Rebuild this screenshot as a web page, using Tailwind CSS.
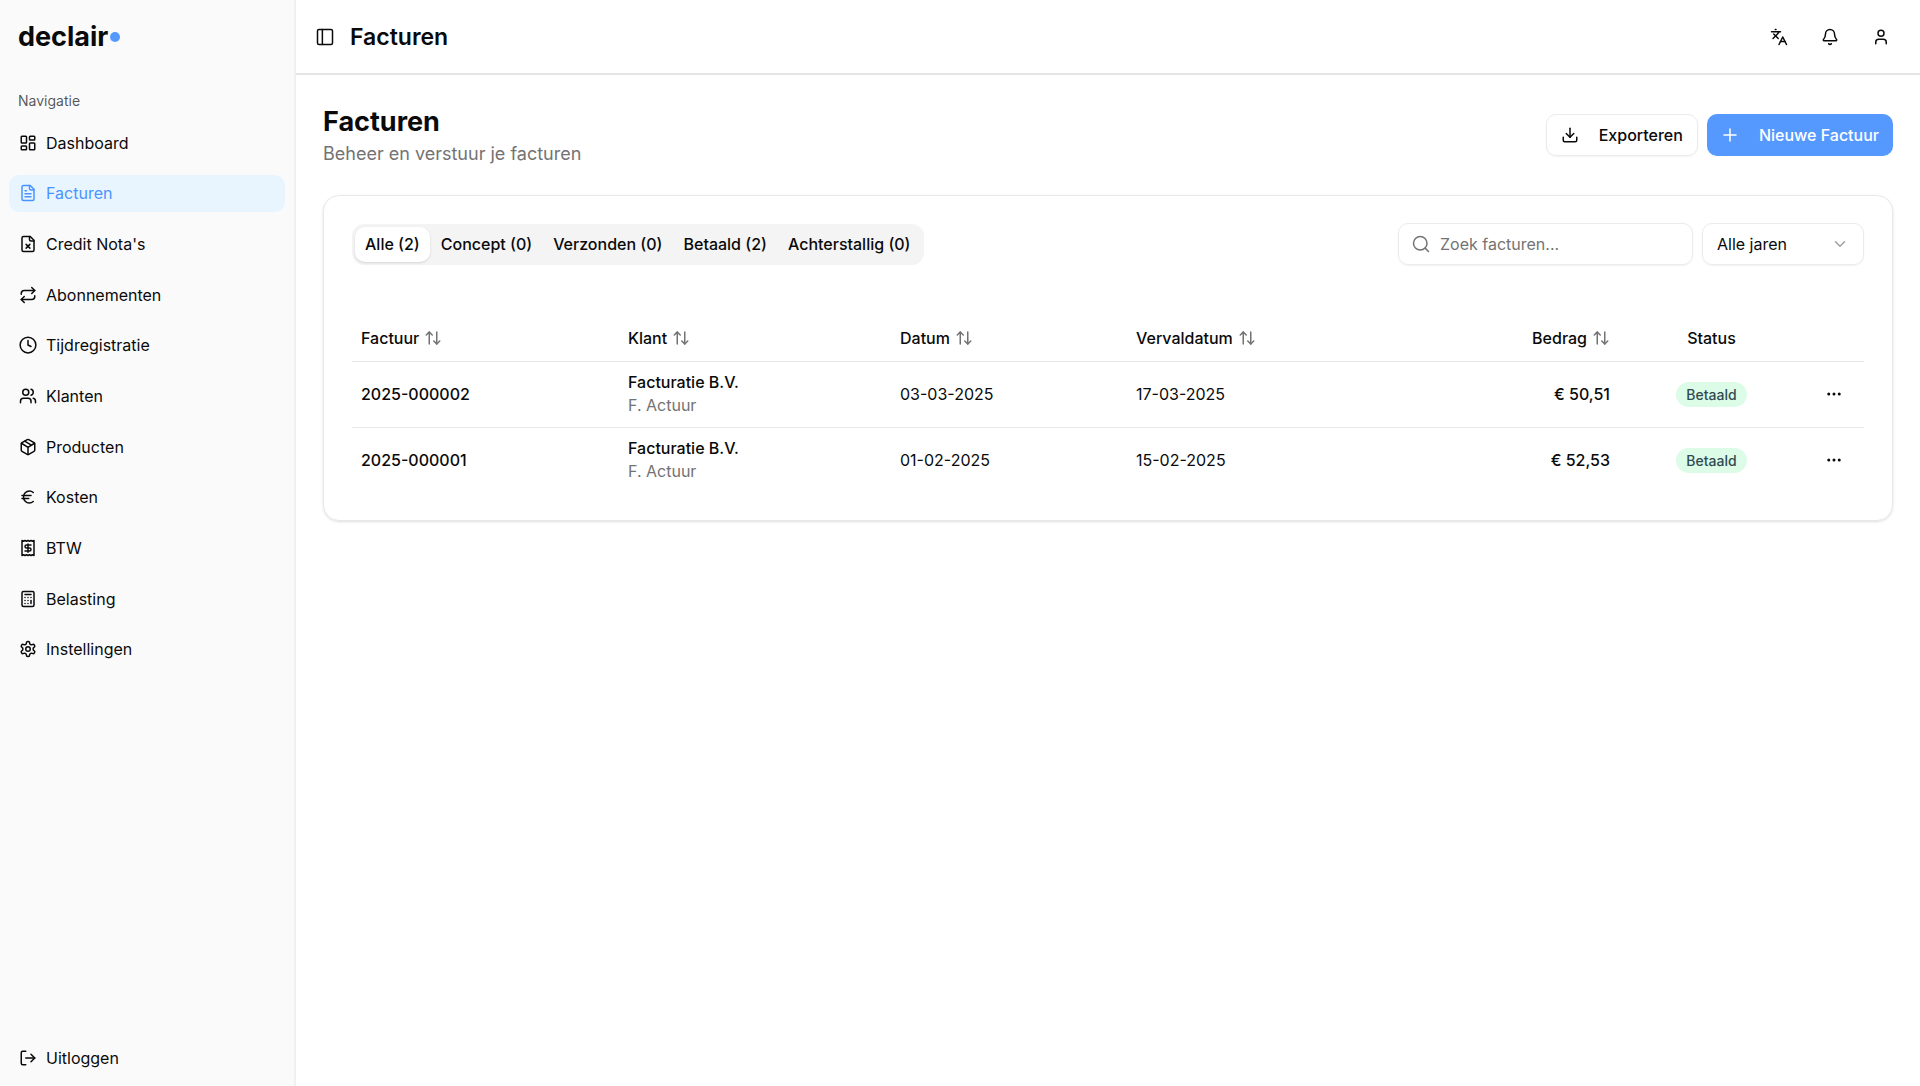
<!DOCTYPE html>
<html lang="nl">
<head>
    <meta charset="UTF-8">
    <meta name="viewport" content="width=device-width, initial-scale=1.0">
    <title>Facturen - declair</title>
    <script src="https://cdn.jsdelivr.net/npm/@tailwindcss/browser@4"></script>
</head>
<body class="flex min-h-screen bg-white font-['Inter',sans-serif] text-base text-neutral-950">
    <!-- icons -->
    <svg class="hidden" xmlns="http://www.w3.org/2000/svg">
        <symbol id="sort" viewBox="0 0 24 24"><path d="m21 16-4 4-4-4"/><path d="M17 20V4"/><path d="m3 8 4-4 4 4"/><path d="M7 4v16"/></symbol>
        <symbol id="dots" viewBox="0 0 24 24"><circle cx="12" cy="12" r="1"/><circle cx="19" cy="12" r="1"/><circle cx="5" cy="12" r="1"/></symbol>
    </svg>

    <aside class="flex w-74 shrink-0 flex-col border-r-2 border-[#f0f0f0] bg-[#fafafa]">
        <a href="#" class="flex h-[74px] items-center gap-[2px] px-[18px]">
            <span class="text-[27px] font-bold">declair</span>
            <span class="size-[10px] rounded-full bg-[#5599ff]"></span>
        </a>
        <div class="flex h-[54px] items-center px-[18px] text-sm text-neutral-950/70">Navigatie</div>
        <nav class="-mt-1 flex h-[544px] flex-col justify-between px-[9px]">
            <a href="#" class="flex h-[37px] items-center gap-[9px] rounded-[10px] px-[10px]">
                <svg class="size-[18px]" viewBox="0 0 24 24" fill="none" stroke="currentColor" stroke-width="2" stroke-linecap="round" stroke-linejoin="round"><rect width="7" height="9" x="3" y="3" rx="1"/><rect width="7" height="5" x="14" y="3" rx="1"/><rect width="7" height="9" x="14" y="12" rx="1"/><rect width="7" height="5" x="3" y="16" rx="1"/></svg>
                Dashboard
            </a>
            <a href="#" class="flex h-[37px] items-center gap-[9px] rounded-[10px] bg-[#e8f5ff] px-[10px] text-[#4a94ff]">
                <svg class="size-[18px]" viewBox="0 0 24 24" fill="none" stroke="currentColor" stroke-width="2" stroke-linecap="round" stroke-linejoin="round"><path d="M15 2H6a2 2 0 0 0-2 2v16a2 2 0 0 0 2 2h12a2 2 0 0 0 2-2V7Z"/><path d="M14 2v4a2 2 0 0 0 2 2h4"/><path d="M10 9H8"/><path d="M16 13H8"/><path d="M16 17H8"/></svg>
                Facturen
            </a>
            <a href="#" class="flex h-[37px] items-center gap-[9px] rounded-[10px] px-[10px]">
                <svg class="size-[18px]" viewBox="0 0 24 24" fill="none" stroke="currentColor" stroke-width="2" stroke-linecap="round" stroke-linejoin="round"><path d="M15 2H6a2 2 0 0 0-2 2v16a2 2 0 0 0 2 2h12a2 2 0 0 0 2-2V7Z"/><path d="M14 2v4a2 2 0 0 0 2 2h4"/><path d="m14.5 12.5-5 5"/><path d="m9.5 12.5 5 5"/></svg>
                Credit Nota's
            </a>
            <a href="#" class="flex h-[37px] items-center gap-[9px] rounded-[10px] px-[10px]">
                <svg class="size-[18px]" viewBox="0 0 24 24" fill="none" stroke="currentColor" stroke-width="2" stroke-linecap="round" stroke-linejoin="round"><path d="m17 2 4 4-4 4"/><path d="M3 11v-1a4 4 0 0 1 4-4h14"/><path d="m7 22-4-4 4-4"/><path d="M21 13v1a4 4 0 0 1-4 4H3"/></svg>
                Abonnementen
            </a>
            <a href="#" class="flex h-[37px] items-center gap-[9px] rounded-[10px] px-[10px]">
                <svg class="size-[18px]" viewBox="0 0 24 24" fill="none" stroke="currentColor" stroke-width="2" stroke-linecap="round" stroke-linejoin="round"><circle cx="12" cy="12" r="10.5"/><path d="M12 6v6l4 2"/></svg>
                Tijdregistratie
            </a>
            <a href="#" class="flex h-[37px] items-center gap-[9px] rounded-[10px] px-[10px]">
                <svg class="size-[18px]" viewBox="0 0 24 24" fill="none" stroke="currentColor" stroke-width="2" stroke-linecap="round" stroke-linejoin="round"><path d="M16 21v-2a4 4 0 0 0-4-4H6a4 4 0 0 0-4 4v2"/><circle cx="9" cy="7" r="4"/><path d="M22 21v-2a4 4 0 0 0-3-3.87"/><path d="M16 3.13a4 4 0 0 1 0 7.75"/></svg>
                Klanten
            </a>
            <a href="#" class="flex h-[37px] items-center gap-[9px] rounded-[10px] px-[10px]">
                <svg class="size-[18px]" viewBox="0 0 24 24" fill="none" stroke="currentColor" stroke-width="2" stroke-linecap="round" stroke-linejoin="round"><path d="M11 21.73a2 2 0 0 0 2 0l7-4A2 2 0 0 0 21 16V8a2 2 0 0 0-1-1.73l-7-4a2 2 0 0 0-2 0l-7 4A2 2 0 0 0 3 8v8a2 2 0 0 0 1 1.73z"/><path d="M12 22V12"/><path d="m3.3 7 7.7 4.73a2 2 0 0 0 2 0L20.7 7"/><path d="m7.5 4.27 9 5.15"/></svg>
                Producten
            </a>
            <a href="#" class="flex h-[37px] items-center gap-[9px] rounded-[10px] px-[10px]">
                <svg class="size-[18px]" viewBox="0 0 24 24" fill="none" stroke="currentColor" stroke-width="2" stroke-linecap="round" stroke-linejoin="round"><path d="M4 10h12"/><path d="M4 14h9"/><path d="M19 6a7.7 7.7 0 0 0-5.2-2A7.9 7.9 0 0 0 6 12c0 4.4 3.5 8 7.8 8 2 0 3.8-.8 5.2-2"/></svg>
                Kosten
            </a>
            <a href="#" class="flex h-[37px] items-center gap-[9px] rounded-[10px] px-[10px]">
                <svg class="size-[18px]" viewBox="0 0 24 24" fill="none" stroke="currentColor" stroke-width="2" stroke-linecap="round" stroke-linejoin="round"><path d="M4 2v20l2-1 2 1 2-1 2 1 2-1 2 1 2-1 2 1V2l-2 1-2-1-2 1-2-1-2 1-2-1-2 1Z"/><path d="M16 8h-6a2 2 0 1 0 0 4h4a2 2 0 1 1 0 4H8"/><path d="M12 17.5v-11"/></svg>
                BTW
            </a>
            <a href="#" class="flex h-[37px] items-center gap-[9px] rounded-[10px] px-[10px]">
                <svg class="size-[18px]" viewBox="0 0 24 24" fill="none" stroke="currentColor" stroke-width="2" stroke-linecap="round" stroke-linejoin="round"><rect width="16" height="20" x="4" y="2" rx="2"/><path d="M8 6h8"/><path d="M16 14v4"/><path d="M16 10h.01"/><path d="M12 10h.01"/><path d="M8 10h.01"/><path d="M12 14h.01"/><path d="M8 14h.01"/><path d="M12 18h.01"/><path d="M8 18h.01"/></svg>
                Belasting
            </a>
            <a href="#" class="flex h-[37px] items-center gap-[9px] rounded-[10px] px-[10px]">
                <svg class="size-[18px]" viewBox="0 0 24 24" fill="none" stroke="currentColor" stroke-width="2" stroke-linecap="round" stroke-linejoin="round"><path d="M12.22 2h-.44a2 2 0 0 0-2 2v.18a2 2 0 0 1-1 1.73l-.43.25a2 2 0 0 1-2 0l-.15-.08a2 2 0 0 0-2.73.73l-.22.38a2 2 0 0 0 .73 2.73l.15.1a2 2 0 0 1 1 1.72v.51a2 2 0 0 1-1 1.74l-.15.09a2 2 0 0 0-.73 2.73l.22.38a2 2 0 0 0 2.73.73l.15-.08a2 2 0 0 1 2 0l.43.25a2 2 0 0 1 1 1.73V20a2 2 0 0 0 2 2h.44a2 2 0 0 0 2-2v-.18a2 2 0 0 1 1-1.73l.43-.25a2 2 0 0 1 2 0l.15.08a2 2 0 0 0 2.73-.73l.22-.39a2 2 0 0 0-.73-2.73l-.15-.08a2 2 0 0 1-1-1.74v-.5a2 2 0 0 1 1-1.74l.15-.09a2 2 0 0 0 .73-2.73l-.22-.38a2 2 0 0 0-2.73-.73l-.15.08a2 2 0 0 1-2 0l-.43-.25a2 2 0 0 1-1-1.73V4a2 2 0 0 0-2-2z"/><circle cx="12" cy="12" r="3"/></svg>
                Instellingen
            </a>
        </nav>
        <div class="mt-auto px-[9px] pb-[10px]">
            <button type="button" class="flex h-[37px] w-full items-center gap-[9px] rounded-[10px] px-[10px]">
                <svg class="size-[18px]" viewBox="0 0 24 24" fill="none" stroke="currentColor" stroke-width="2" stroke-linecap="round" stroke-linejoin="round"><path d="m16 17 5-5-5-5"/><path d="M21 12H9"/><path d="M9 21H5a2 2 0 0 1-2-2V5a2 2 0 0 1 2-2h4"/></svg>
                Uitloggen
            </button>
        </div>
    </aside>

    <div class="flex min-w-0 flex-1 flex-col">
        <header class="flex h-[75px] items-center justify-between border-b-2 border-[#e5e5e5] pr-[18px] pl-5">
            <div class="flex items-center gap-4">
                <button type="button" aria-label="Zijbalk">
                    <svg class="size-[18px]" viewBox="0 0 24 24" fill="none" stroke="currentColor" stroke-width="2" stroke-linecap="round" stroke-linejoin="round"><rect width="20" height="20" x="2" y="2" rx="2"/><path d="M8.5 2v20"/></svg>
                </button>
                <span class="pt-px text-[23px] font-semibold">Facturen</span>
            </div>
            <div class="flex items-center gap-[9px]">
                <button type="button" aria-label="Taal" class="flex size-[42px] items-center justify-center">
                    <svg class="size-[18px]" viewBox="0 0 24 24" fill="none" stroke="currentColor" stroke-width="2" stroke-linecap="round" stroke-linejoin="round"><path d="m5 8 6 6"/><path d="m4 14 6-6 2-3"/><path d="M2 5h12"/><path d="M7 2h1"/><path d="m22 22-5-10-5 10"/><path d="M14 18h6"/></svg>
                </button>
                <button type="button" aria-label="Meldingen" class="flex size-[42px] items-center justify-center">
                    <svg class="size-[18px]" viewBox="0 0 24 24" fill="none" stroke="currentColor" stroke-width="2" stroke-linecap="round" stroke-linejoin="round"><path d="M10.268 21a2 2 0 0 0 3.464 0"/><path d="M3.262 15.326A1 1 0 0 0 4 17h16a1 1 0 0 0 .74-1.673C19.41 13.956 18 12.499 18 8A6 6 0 0 0 6 8c0 4.499-1.411 5.956-2.738 7.326"/></svg>
                </button>
                <button type="button" aria-label="Account" class="flex size-[42px] items-center justify-center">
                    <svg class="size-[18px]" viewBox="0 0 24 24" fill="none" stroke="currentColor" stroke-width="2" stroke-linecap="round" stroke-linejoin="round"><path d="M19 21v-2a4 4 0 0 0-4-4H9a4 4 0 0 0-4 4v2"/><circle cx="12" cy="7" r="4"/></svg>
                </button>
            </div>
        </header>

        <main class="flex flex-col gap-[27px] p-[27px]">
            <div class="flex items-center justify-between">
                <div class="pt-px">
                    <h1 class="text-[27px] leading-[37px] font-bold">Facturen</h1>
                    <p class="text-lg leading-7 text-neutral-500">Beheer en verstuur je facturen</p>
                </div>
                <div class="flex gap-[9px]">
                    <button type="button" class="flex h-[42px] items-center gap-5 rounded-[10px] border border-[#ebebeb] px-[14px] font-medium shadow-xs">
                        <svg class="size-[18px]" viewBox="0 0 24 24" fill="none" stroke="currentColor" stroke-width="2" stroke-linecap="round" stroke-linejoin="round"><path d="M12 15V3"/><path d="M21 15v4a2 2 0 0 1-2 2H5a2 2 0 0 1-2-2v-4"/><path d="m7 10 5 5 5-5"/></svg>
                        Exporteren
                    </button>
                    <button type="button" class="flex h-[42px] items-center gap-5 rounded-[10px] bg-[#5599ff] px-[14px] font-medium text-white">
                        <svg class="size-[18px]" viewBox="0 0 24 24" fill="none" stroke="currentColor" stroke-width="2" stroke-linecap="round" stroke-linejoin="round"><path d="M4 12h16"/><path d="M12 4v16"/></svg>
                        Nieuwe Factuur
                    </button>
                </div>
            </div>

            <section class="rounded-2xl border border-[#e8e8e8] px-7 py-[27px] shadow-sm">
                <div class="flex items-center justify-between">
                    <div class="flex h-[41px] items-center gap-px rounded-xl bg-[#f4f4f4] p-[3px] font-medium">
                        <button type="button" class="h-[35px] rounded-[10px] bg-white px-[10px] shadow-sm">Alle (2)</button>
                        <button type="button" class="h-[35px] rounded-[10px] px-[10px]">Concept (0)</button>
                        <button type="button" class="h-[35px] rounded-[10px] px-[10px]">Verzonden (0)</button>
                        <button type="button" class="h-[35px] rounded-[10px] px-[10px]">Betaald (2)</button>
                        <button type="button" class="h-[35px] rounded-[10px] px-[10px]">Achterstallig (0)</button>
                    </div>
                    <div class="flex gap-[9px]">
                        <label class="flex h-[42px] w-[295px] items-center gap-[10px] rounded-[10px] border border-[#ebebeb] px-[13px] shadow-xs">
                            <svg class="size-[18px] shrink-0 text-neutral-500" viewBox="0 0 24 24" fill="none" stroke="currentColor" stroke-width="2" stroke-linecap="round" stroke-linejoin="round"><circle cx="11" cy="11" r="9"/><path d="m22 22-4.5-4.5"/></svg>
                            <input type="text" aria-label="Zoek facturen" placeholder="Zoek facturen..." class="min-w-0 flex-1 outline-none placeholder:text-neutral-500">
                        </label>
                        <div class="relative">
                            <select aria-label="Jaar" class="h-[42px] w-[162px] appearance-none rounded-[10px] border border-[#ebebeb] px-[14px] shadow-xs">
                                <option>Alle jaren</option>
                            </select>
                            <svg class="pointer-events-none absolute top-3 right-[15px] size-[18px] text-neutral-400" viewBox="0 0 24 24" fill="none" stroke="currentColor" stroke-width="2" stroke-linecap="round" stroke-linejoin="round"><path d="m6 9 6 6 6-6"/></svg>
                        </div>
                    </div>
                </div>

                <table class="mt-[50px] w-full table-fixed text-left">
                    <colgroup>
                        <col class="w-[267px]">
                        <col class="w-[272px]">
                        <col class="w-[236px]">
                        <col class="w-[492px]">
                        <col class="w-[185px]">
                        <col class="w-[60px]">
                    </colgroup>
                    <thead>
                        <tr class="h-[46px] border-b border-[#e8e8e8]">
                            <th class="px-[9px] font-medium"><button type="button" class="flex items-center gap-[5px]">Factuur <svg class="size-[18px] text-neutral-500" fill="none" stroke="currentColor" stroke-width="2" stroke-linecap="round" stroke-linejoin="round"><use href="#sort"/></svg></button></th>
                            <th class="px-[9px] font-medium"><button type="button" class="flex items-center gap-[5px]">Klant <svg class="size-[18px] text-neutral-500" fill="none" stroke="currentColor" stroke-width="2" stroke-linecap="round" stroke-linejoin="round"><use href="#sort"/></svg></button></th>
                            <th class="px-[9px] font-medium"><button type="button" class="flex items-center gap-[5px]">Datum <svg class="size-[18px] text-neutral-500" fill="none" stroke="currentColor" stroke-width="2" stroke-linecap="round" stroke-linejoin="round"><use href="#sort"/></svg></button></th>
                            <th class="px-[9px] font-medium">
                                <div class="flex justify-between">
                                    <button type="button" class="flex items-center gap-[5px]">Vervaldatum <svg class="size-[18px] text-neutral-500" fill="none" stroke="currentColor" stroke-width="2" stroke-linecap="round" stroke-linejoin="round"><use href="#sort"/></svg></button>
                                    <button type="button" class="flex items-center gap-[5px]">Bedrag <svg class="size-[18px] text-neutral-500" fill="none" stroke="currentColor" stroke-width="2" stroke-linecap="round" stroke-linejoin="round"><use href="#sort"/></svg></button>
                                </div>
                            </th>
                            <th class="px-[9px] text-center font-medium">Status</th>
                            <th></th>
                        </tr>
                    </thead>
                    <tbody>
                        <tr class="h-[66px] border-b border-[#e8e8e8]">
                            <td class="px-[9px] font-medium">2025-000002</td>
                            <td class="px-[9px] leading-[23px]"><div class="font-medium">Facturatie B.V.</div><div class="text-neutral-500">F. Actuur</div></td>
                            <td class="px-[9px]">03-03-2025</td>
                            <td class="px-[9px]"><div class="flex justify-between"><span>17-03-2025</span><span class="font-medium">€ 50,51</span></div></td>
                            <td class="px-[9px] text-center"><span class="inline-block rounded-full bg-[#dcfce7] px-[10px] py-[2px] text-sm leading-[21px] font-medium text-[#314a52]">Betaald</span></td>
                            <td><button type="button" aria-label="Acties" class="mx-auto block"><svg class="size-[18px]" fill="currentColor" stroke="currentColor" stroke-width="2"><use href="#dots"/></svg></button></td>
                        </tr>
                        <tr class="h-[66px]">
                            <td class="px-[9px] font-medium">2025-000001</td>
                            <td class="px-[9px] leading-[23px]"><div class="font-medium">Facturatie B.V.</div><div class="text-neutral-500">F. Actuur</div></td>
                            <td class="px-[9px]">01-02-2025</td>
                            <td class="px-[9px]"><div class="flex justify-between"><span>15-02-2025</span><span class="font-medium">€ 52,53</span></div></td>
                            <td class="px-[9px] text-center"><span class="inline-block rounded-full bg-[#dcfce7] px-[10px] py-[2px] text-sm leading-[21px] font-medium text-[#314a52]">Betaald</span></td>
                            <td><button type="button" aria-label="Acties" class="mx-auto block"><svg class="size-[18px]" fill="currentColor" stroke="currentColor" stroke-width="2"><use href="#dots"/></svg></button></td>
                        </tr>
                    </tbody>
                </table>
            </section>
        </main>
    </div>
</body>
</html>
